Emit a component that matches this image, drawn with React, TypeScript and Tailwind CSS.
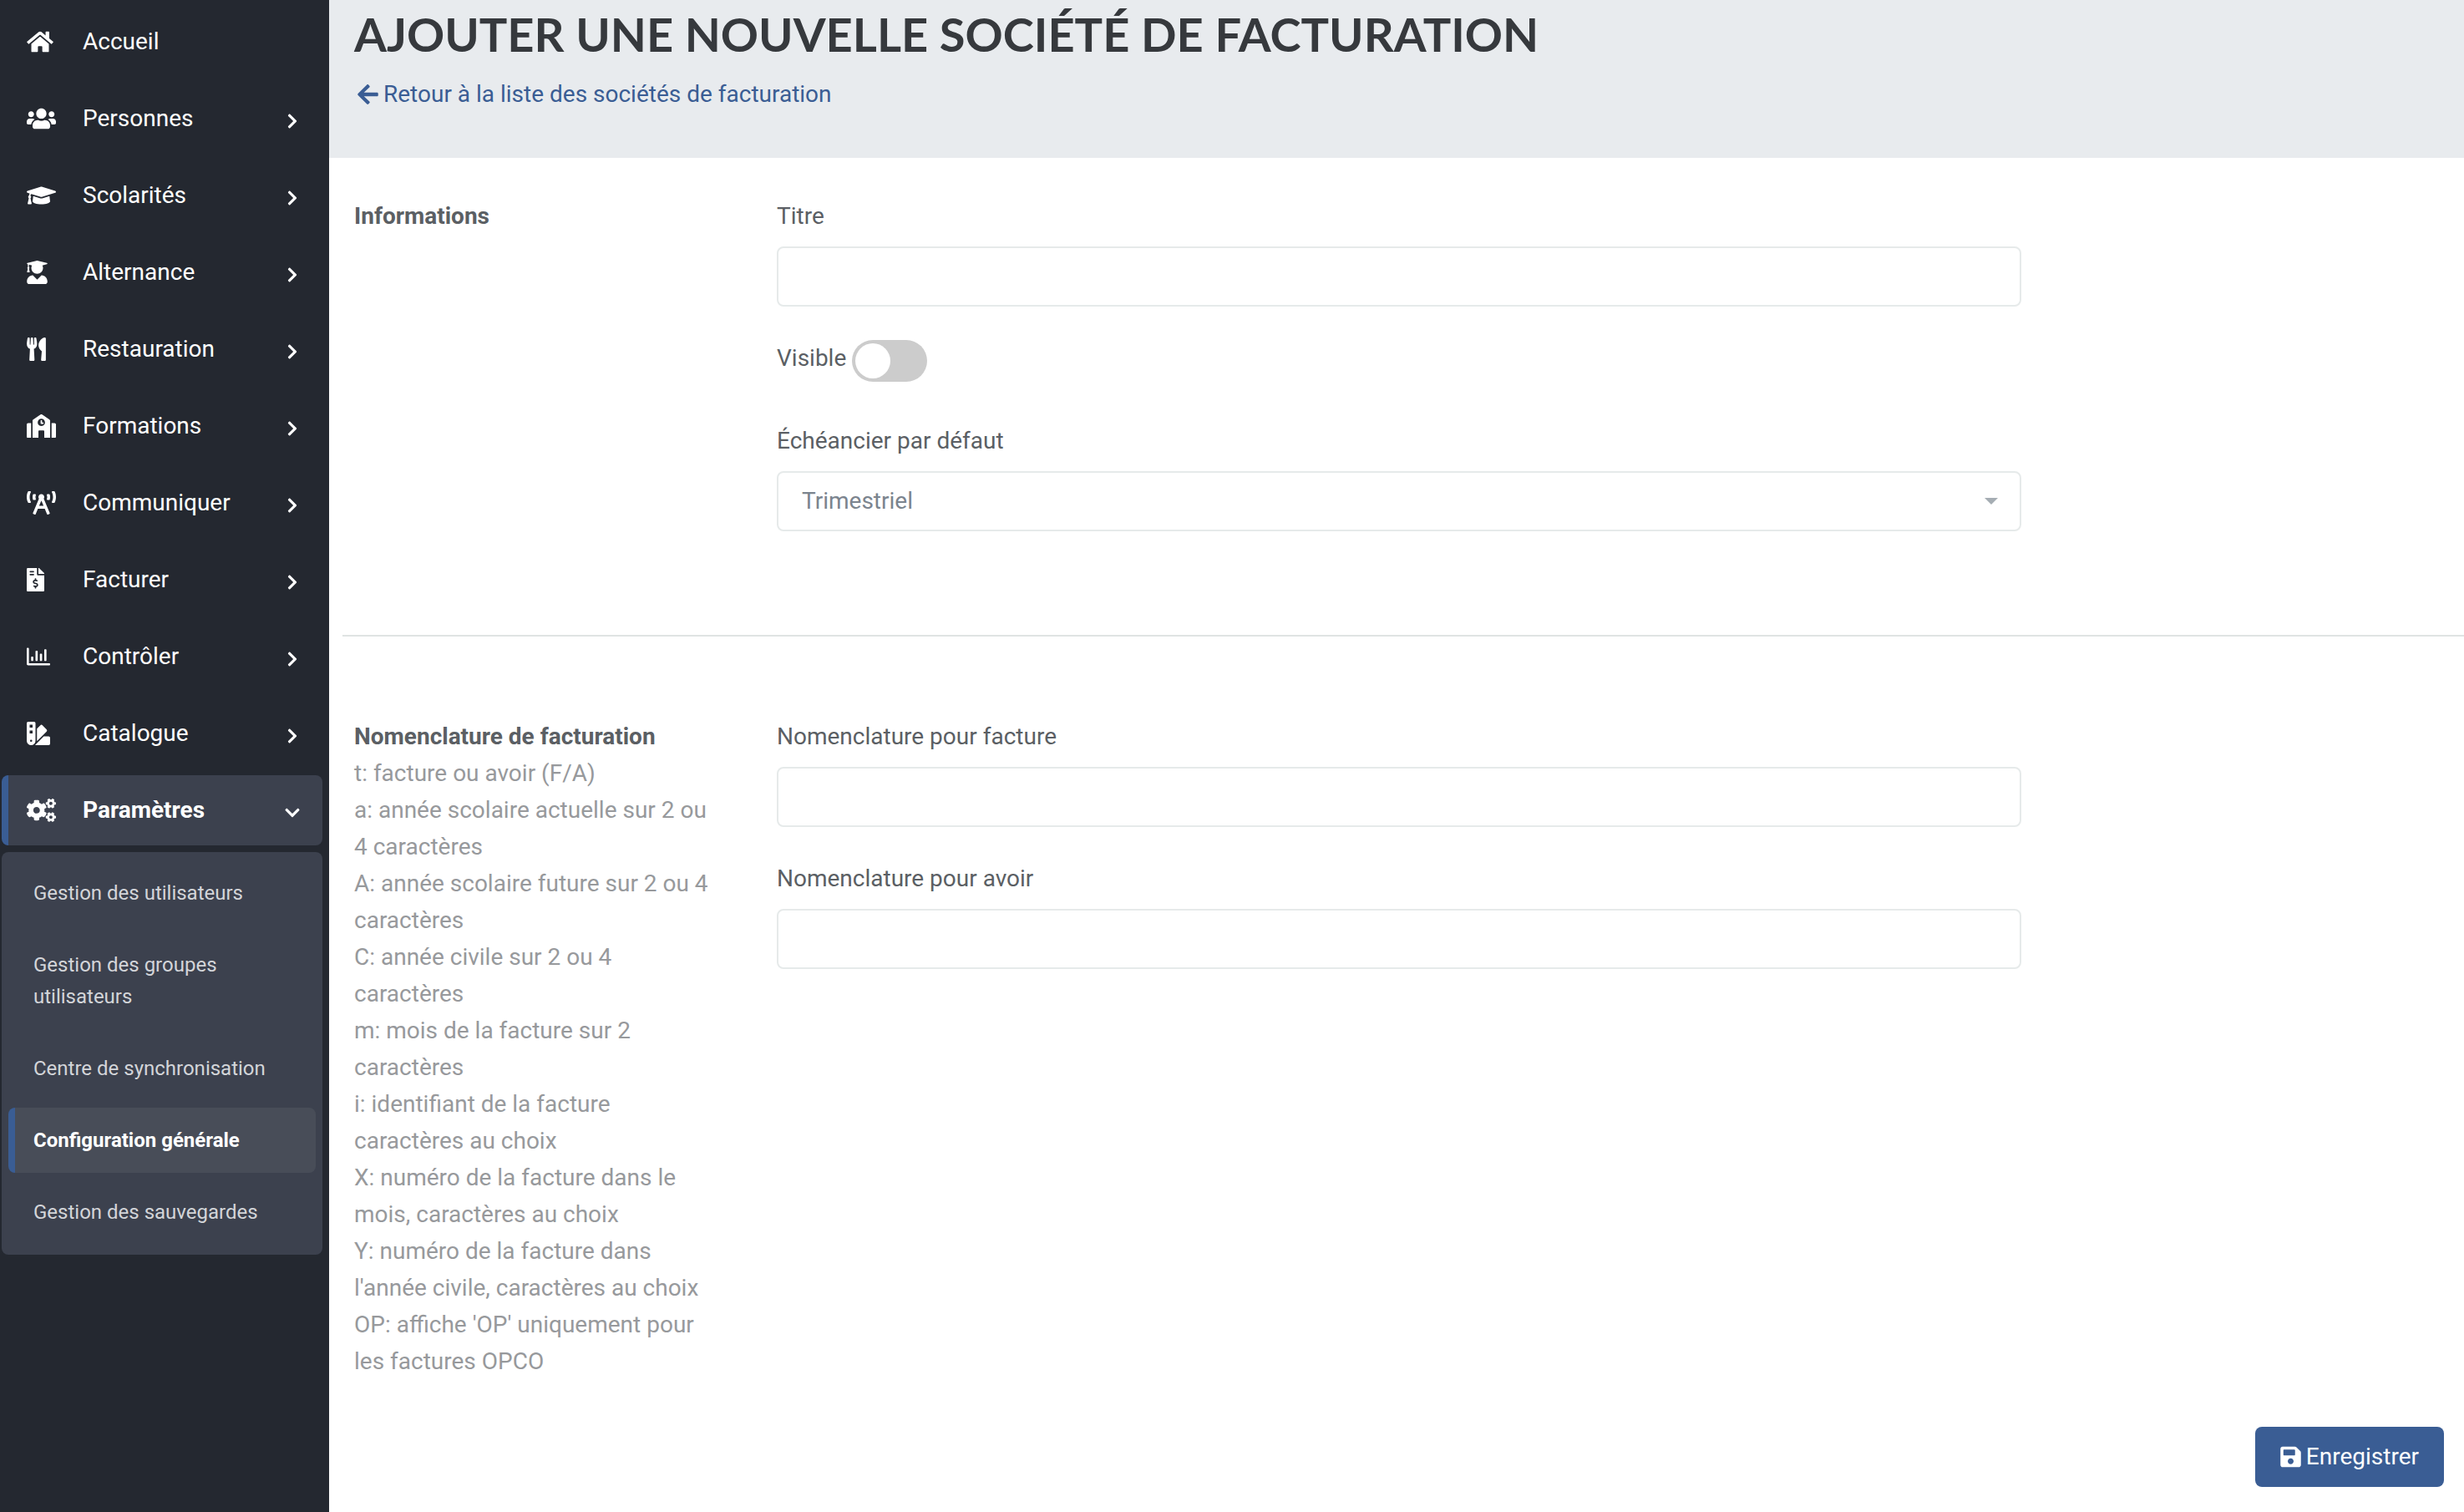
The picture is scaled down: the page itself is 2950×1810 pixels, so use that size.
import { useState } from "react";
import type { IconType } from "react-icons";
import {
  FaArrowLeft,
  FaBroadcastTower,
  FaChevronDown,
  FaChevronRight,
  FaCogs,
  FaFileInvoiceDollar,
  FaGraduationCap,
  FaHome,
  FaRegChartBar,
  FaSave,
  FaSchool,
  FaSwatchbook,
  FaUserGraduate,
  FaUsers,
  FaUtensils,
} from "react-icons/fa";

interface NavEntry {
  label: string;
  icon: IconType;
  // the glyphs share a height but not a width
  size: string;
  children?: string[];
  leaf?: boolean;
}

const NAV: NavEntry[] = [
  { label: "Accueil", icon: FaHome, size: "h-7 w-8", leaf: true },
  { label: "Personnes", icon: FaUsers, size: "h-7 w-[35px]" },
  { label: "Scolarités", icon: FaGraduationCap, size: "h-7 w-[35px]" },
  { label: "Alternance", icon: FaUserGraduate, size: "h-7 w-[25px]" },
  { label: "Restauration", icon: FaUtensils, size: "h-7 w-[23px]" },
  { label: "Formations", icon: FaSchool, size: "h-7 w-[35px]" },
  { label: "Communiquer", icon: FaBroadcastTower, size: "h-7 w-[35px]" },
  { label: "Facturer", icon: FaFileInvoiceDollar, size: "h-7 w-[21px]" },
  { label: "Contrôler", icon: FaRegChartBar, size: "h-7 w-7" },
  { label: "Catalogue", icon: FaSwatchbook, size: "h-7 w-7" },
  {
    label: "Paramètres",
    icon: FaCogs,
    size: "h-7 w-[35px]",
    children: [
      "Gestion des utilisateurs",
      "Gestion des groupes utilisateurs",
      "Centre de synchronisation",
      "Configuration générale",
      "Gestion des sauvegardes",
    ],
  },
];

const HELP_LINES = [
  "t: facture ou avoir (F/A)",
  "a: année scolaire actuelle sur 2 ou 4 caractères",
  "A: année scolaire future sur 2 ou 4 caractères",
  "C: année civile sur 2 ou 4 caractères",
  "m: mois de la facture sur 2 caractères",
  "i: identifiant de la facture caractères au choix",
  "X: numéro de la facture dans le mois, caractères au choix",
  "Y: numéro de la facture dans l'année civile, caractères au choix",
  "OP: affiche 'OP' uniquement pour les factures OPCO",
];

const FIELD =
  "block w-full h-[72px] rounded-lg border-2 border-[#e6eaea] bg-white px-7 text-[28px] text-[#7b848e] outline-none focus:border-[#3a5d94]";

function SubMenu({ items }: { items: string[] }) {
  return (
    <ul className="mt-2 flex flex-col gap-2 rounded-lg bg-[#3c414e] px-2 pt-[10px] pb-3">
      {items.map((item) => {
        const current = item === "Configuration générale";
        return (
          <li key={item}>
            <a
              href="#"
              className={
                current
                  ? "block rounded-lg border-l-8 border-[#3a5d94] bg-[#484d58] py-5 pl-[22px] pr-4 text-[24px] leading-[38px] font-bold text-white"
                  : "block rounded-lg border-l-8 border-transparent py-5 pl-[22px] pr-4 text-[24px] leading-[38px] text-[#d3d5d9]"
              }
            >
              {item}
            </a>
          </li>
        );
      })}
    </ul>
  );
}

function Sidebar() {
  return (
    <nav className="w-[394px] flex-shrink-0 bg-[#242830] pt-2 pl-[2px] pr-2">
      <ul className="flex flex-col gap-2">
        {NAV.map(({ label, icon: Icon, size, children, leaf }) => {
          const Chevron = children ? FaChevronDown : FaChevronRight;
          return (
            <li key={label}>
              <a
                href="#"
                className={
                  children
                    ? "flex h-[84px] items-center rounded-lg border-l-8 border-[#3a5d94] bg-[#3c414e] pl-[22px] pr-[26px] text-[28px] font-bold text-white"
                    : "flex h-[84px] items-center rounded-lg border-l-8 border-transparent pl-[22px] pr-[26px] text-[28px] text-white"
                }
              >
                <span className="w-[67px] flex-shrink-0">
                  <Icon className={size} />
                </span>
                <span className="flex-1">{label}</span>
                {!leaf && (
                  <span className="flex w-5 justify-center pt-[6px]">
                    <Chevron className="size-5" />
                  </span>
                )}
              </a>
              {children && <SubMenu items={children} />}
            </li>
          );
        })}
      </ul>
    </nav>
  );
}

function TextField({ id, label }: { id: string; label: string }) {
  return (
    <div>
      <label htmlFor={id} className="mb-[14px] block">
        {label}
      </label>
      <input id={id} type="text" className={FIELD} />
    </div>
  );
}

export default function App() {
  const [visible, setVisible] = useState(false);
  const [schedule, setSchedule] = useState("Trimestriel");

  return (
    <div className="flex min-h-screen bg-white font-['Roboto',sans-serif] text-[28px] leading-[44px] text-[#5b5f64]">
      <Sidebar />

      <main className="flex min-w-0 flex-1 flex-col">
        <header className="bg-[#e8ebee] pb-[54px] pl-[30px]">
          <h1 className="font-['Lato',sans-serif] text-[56px] leading-[82px] font-bold text-[#36393d] uppercase">
            Ajouter une nouvelle société de facturation
          </h1>
          <a href="#" className="mt-[9px] flex items-center gap-[6px] pl-1 text-[#3a5d94]">
            <FaArrowLeft className="h-7 w-[25px]" />
            Retour à la liste des sociétés de facturation
          </a>
        </header>

        <form className="flex flex-1 flex-col" onSubmit={(e) => e.preventDefault()}>
          {/* Informations */}
          <section className="grid grid-cols-[506fr_1490fr_530fr] pt-12 pb-[124px] pl-[30px]">
            <h2 className="font-bold">Informations</h2>
            <div>
              <TextField id="titre" label="Titre" />
              <div className="mt-10 flex gap-[7px]">
                <label htmlFor="visible">Visible</label>
                <input
                  id="visible"
                  type="checkbox"
                  role="switch"
                  checked={visible}
                  onChange={(e) => setVisible(e.target.checked)}
                  className="h-[50px] w-[90px] appearance-none rounded-full bg-[#cccccc] p-1 before:block before:size-[42px] before:rounded-full before:bg-white checked:bg-[#3a5d94] checked:before:ml-10"
                />
              </div>
              <label htmlFor="echeancier" className="mt-[49px] mb-[14px] block">
                Échéancier par défaut
              </label>
              <div className="relative">
                <select
                  id="echeancier"
                  value={schedule}
                  onChange={(e) => setSchedule(e.target.value)}
                  className={`${FIELD} appearance-none`}
                >
                  <option>Mensuel</option>
                  <option>Trimestriel</option>
                  <option>Annuel</option>
                </select>
                <svg
                  viewBox="0 0 16 8"
                  className="pointer-events-none absolute top-8 right-7 h-2 w-4 fill-[#a5adb3]"
                >
                  <path d="M0 0h16L8 8z" />
                </svg>
              </div>
            </div>
          </section>

          <hr className="ml-4 border-t-2 border-[#dfe4e3]" />

          {/* Nomenclature */}
          <section className="grid grid-cols-[506fr_1490fr_530fr] pt-[98px] pl-[30px]">
            <div className="pr-[72px]">
              <h2 className="font-bold">Nomenclature de facturation</h2>
              {HELP_LINES.map((line) => (
                <p key={line} className="text-[#97999c]">
                  {line}
                </p>
              ))}
            </div>
            <div className="flex flex-col gap-10">
              <TextField id="facture" label="Nomenclature pour facture" />
              <TextField id="avoir" label="Nomenclature pour avoir" />
            </div>
          </section>

          <div className="mt-auto flex justify-end pr-6 pb-[30px]">
            <button
              type="submit"
              className="flex h-[72px] items-center gap-[6px] rounded-lg bg-[#3a5d94] px-[30px] text-white"
            >
              <FaSave className="h-7 w-[25px]" />
              Enregistrer
            </button>
          </div>
        </form>
      </main>
    </div>
  );
}
